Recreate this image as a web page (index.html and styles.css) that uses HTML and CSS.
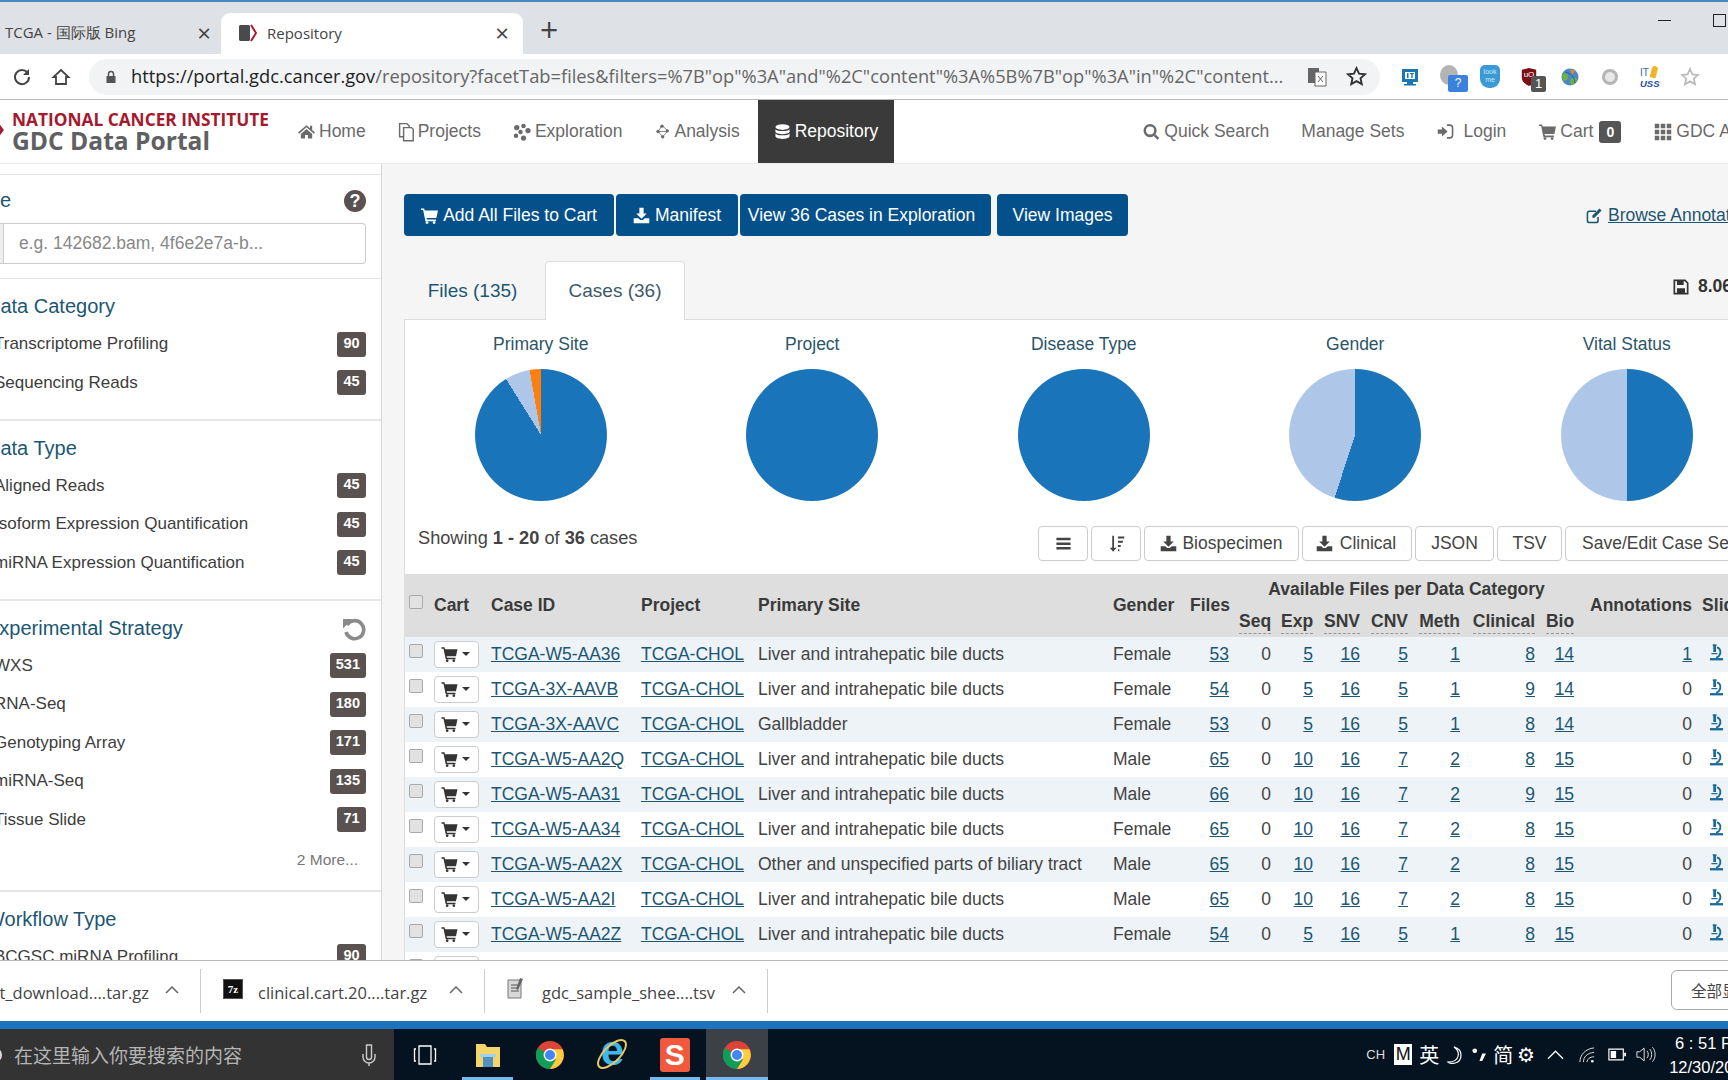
FILE: index.html
```html
<!DOCTYPE html>
<html lang="en">
<head>
<meta charset="utf-8">
<title>Repository</title>
<link rel="stylesheet" href="styles.css">
</head>
<body>
<svg class="defs" width="0" height="0" aria-hidden="true">
  <symbol id="i-cart" viewBox="0 0 24 24"><path d="M0 2h4.500l.8 3H24l-2.300 10.500H7.800l.5 2.200H21v2.300H6.300L3 4.300H0z"/><circle cx="8.500" cy="22" r="2"/><circle cx="18.500" cy="22" r="2"/></symbol>
  <symbol id="i-dl" viewBox="0 0 24 24"><path d="M9 1h6v8h4.500L12 16.500 4.500 9H9z"/><path d="M1 16h6.500l2.500 2.500h4l2.500-2.500H23v7H1z"/></symbol>
  <symbol id="i-home" viewBox="0 0 24 24"><path d="M12 3 0 13.500l1.500 1.700L12 6l10.500 9.200 1.500-1.700-4-3.500V4h-3v3.300z"/><path d="M4 15.500 12 8.500l8 7V22h-6v-5h-4v5H4z"/></symbol>
  <symbol id="i-copy" viewBox="0 0 20 24"><path fill="none" stroke="currentColor" stroke-width="1.800" d="M7 6.500V23h12V8.500L17 6.500zM7 18H2V1.500h9l3 3v2"/></symbol>
  <symbol id="i-dots" viewBox="0 0 24 24"><circle cx="5" cy="6" r="3.500"/><circle cx="14" cy="4" r="3"/><circle cx="20" cy="10" r="3.500"/><circle cx="10" cy="12" r="3"/><circle cx="4" cy="17" r="3"/><circle cx="14" cy="20" r="3.500"/></symbol>
  <symbol id="i-net" viewBox="0 0 24 24"><g fill="none" stroke="currentColor" stroke-width="1.200"><path d="M12 3 6 12l7 8M12 3l9 8-8 9M6 12h15"/></g><circle cx="12" cy="4" r="2.500"/><circle cx="6" cy="12" r="2.500"/><circle cx="20" cy="11" r="2.500"/><circle cx="13" cy="20" r="2.500"/></symbol>
  <symbol id="i-db" viewBox="0 0 24 24"><ellipse cx="12" cy="5" rx="10" ry="4"/><path d="M2 8c2 3.500 18 3.500 20 0v4c-2 4-18 4-20 0zM2 14c2 3.500 18 3.500 20 0v4c-1 5-19 5-20 0z"/></symbol>
  <symbol id="i-search" viewBox="0 0 24 24"><circle cx="10" cy="10" r="7.500" fill="none" stroke="currentColor" stroke-width="3.600"/><path d="M15 17.500l2.500-2.500L23 20.500 20.500 23z"/></symbol>
  <symbol id="i-login" viewBox="0 0 24 24"><path d="M1 9h6V5l8 7-8 7v-4H1z"/><path fill="none" stroke="currentColor" stroke-width="2.200" d="M14 3h4c3 0 4 2 4 4v10c0 2-1 4-4 4h-4"/></symbol>
  <symbol id="i-grid" viewBox="0 0 24 24"><path d="M1 1h6v6H1zM9 1h6v6H9zM17 1h6v6h-6zM1 9h6v6H1zM9 9h6v6H9zM17 9h6v6h-6zM1 17h6v6H1zM9 17h6v6H9zM17 17h6v6h-6z"/></symbol>
  <symbol id="i-bars" viewBox="0 0 24 24"><path d="M2 4h20v3.500H2zM2 10.500h20V14H2zM2 17h20v3.500H2z"/></symbol>
  <symbol id="i-sort" viewBox="0 0 24 24"><path d="M6 1h2.500v17H12l-4.700 5.500L2.500 18H6zM14 2h9v3h-9zM14 8h7v3h-7zM14 14h4v3h-4zM14 20h2v3h-2z"/></symbol>
  <symbol id="i-scope" viewBox="0 0 14 18"><path d="M3 0h4v2H6.500v6.500H3.500V2H3zM1.500 9.500h6.500v1.500H1.500z"/><path fill="none" stroke="currentColor" stroke-width="2" d="M7.500 3.500c4 1 5 6 2 9.500-1 1-2 1.500-3 1.500"/><path d="M0 15h14v2.500H0z"/></symbol>
  <symbol id="i-edit" viewBox="0 0 24 24"><path fill="none" stroke="currentColor" stroke-width="2.200" d="M17 14v5c0 2-1 3-3 3H5c-2 0-3-1-3-3V9c0-2 1-3 3-3h9"/><path d="M9 12 19 2l3 3-10 10H9z"/></symbol>
  <symbol id="i-save" viewBox="0 0 24 24"><path fill="none" stroke="currentColor" stroke-width="2.500" d="M2 2h16l4 4v16H2z"/><path d="M6 2h10v7H6zM6 14h12v8H6z"/></symbol>
  <symbol id="i-chrome" viewBox="0 0 24 24"><circle cx="12" cy="12" r="12" fill="#db4437"/><path d="M12 12 1.600 6A12 12 0 0 0 12 24l5-8z" fill="#0f9d58"/><path d="M12 7h10.700A12 12 0 0 1 12 24l5-8z" fill="#ffcd40"/><circle cx="12" cy="12" r="5.500" fill="#fff"/><circle cx="12" cy="12" r="4.300" fill="#4285f4"/></symbol>
  <symbol id="i-chev" viewBox="0 0 14 8"><path fill="none" stroke="#666" stroke-width="1.500" d="M1 7l6-6 6 6"/></symbol>
</svg>

<div class="tabstrip">
  <div class="tab tab-idle"><span class="tab-title">TCGA - 国际版 Bing</span><span class="tab-x">×</span></div>
  <div class="tab tab-active">
    <svg class="favicon" viewBox="0 0 20 20"><path fill="#4a4a4a" d="M3 2h9l1 1v14l-1 1H3l-1-1V3z"/><path fill="none" stroke="#a6192e" stroke-width="2" d="M14 2l5 8-5 8"/></svg>
    <span class="tab-title">Repository</span><span class="tab-x">×</span>
  </div>
  <span class="tab-plus">+</span>
  <div class="winctl"><span class="win-min"></span><span class="win-max"></span></div>
</div>

<div class="toolbar">
  <svg class="tb-reload" viewBox="0 0 20 20"><path fill="none" stroke="#444" stroke-width="2" d="M16 6.500A7 7 0 1 0 17 10"/><path fill="#444" d="M17 2v6h-6z"/></svg>
  <svg class="tb-home" viewBox="0 0 20 20"><path fill="none" stroke="#444" stroke-width="1.800" d="M10 3 2.500 10H5v7h10v-7h2.500z"/></svg>
  <div class="omnibox">
    <svg class="lock" viewBox="0 0 12 14"><path fill="none" stroke="#555" stroke-width="1.500" d="M3.500 6V4a2.500 2.500 0 0 1 5 0v2"/><path fill="#555" d="M1.500 6h9v7h-9z"/></svg>
    <span class="url"><b>https://portal.gdc.cancer.gov</b>/repository?facetTab=files&amp;filters=%7B"op"%3A"and"%2C"content"%3A%5B%7B"op"%3A"in"%2C"content...</span>
    <svg class="translate" viewBox="0 0 20 20"><path fill="#666" d="M1 1h11v15H1z"/><path fill="#fff" stroke="#666" d="M8 5h11v14H8z"/><path fill="none" stroke="#666" d="M11 9l5 6M16 9l-5 6"/></svg>
    <svg class="star" viewBox="0 0 20 20"><path fill="none" stroke="#333" stroke-width="1.800" d="M10 2l2.400 5.300 5.600.6-4.200 3.800 1.200 5.600-5-2.900-5 2.900 1.200-5.600L2 7.900l5.600-.6z"/></svg>
  </div>
  <div class="exts">
    <svg class="ext" viewBox="0 0 20 20"><path fill="#1a77b5" d="M2 2h16v13h-5v2h3v1.500H4V17h3v-2H2z"/><path fill="#fff" d="M5 5h10v7H5z"/><path fill="#1a77b5" d="M7 6h1.500v5H7zM10 6h4v1h-1.300v4h-1.400V7H10z"/></svg>
    <span class="ext ext-msg"><i class="msg-blob"></i><i class="msg-q">?</i></span>
    <span class="ext ext-look">look<br>me</span>
    <span class="ext ext-shield"><svg viewBox="0 0 20 20"><path fill="#7b1113" d="M2 2l8-2 8 2v9c0 4-4 7-8 9-4-2-8-5-8-9z"/></svg><i class="shield-u">uO</i><i class="shield-n">1</i></span>
    <svg class="ext" viewBox="0 0 20 20"><circle cx="10" cy="10" r="8.500" fill="#4a86c8"/><path fill="#6cb33f" d="M2 8c3-3 6-2 6 2s-4 4-5 4zM10 13c3-3 6-2 7-1s-3 6-6 6z"/><path fill="#e08a2e" d="M10 2l5 2-3 4z"/><path fill="none" stroke="#2b5f8f" d="M5 5c6 1 10 6 10 11"/></svg>
    <span class="ext ext-orb"></span>
    <span class="ext ext-uss"><i class="uss-it">IT</i><i class="uss-b">USS</i><i class="uss-fl"></i></span>
    <svg class="ext" viewBox="0 0 20 20"><path fill="none" stroke="#bbb" stroke-width="1.800" d="M10 2l2.400 5.300 5.600.6-4.200 3.800 1.200 5.600-5-2.900-5 2.900 1.200-5.600L2 7.900l5.600-.6z"/></svg>
  </div>
</div>

<div class="page">
  <header class="nav">
    <div class="logo">
      <svg class="logo-mark" viewBox="0 0 6 20"><path fill="none" stroke="#a6192e" stroke-width="3" d="M-4 2l6 8-6 8"/></svg>
      <div class="logo-nci">NATIONAL CANCER INSTITUTE</div>
      <div class="logo-gdc">GDC Data Portal</div>
    </div>
    <a class="nav-item"><svg class="ni ni-16"><use href="#i-home"/></svg>Home</a>
    <a class="nav-item"><svg class="ni ni-copy"><use href="#i-copy"/></svg>Projects</a>
    <a class="nav-item"><svg class="ni ni-18"><use href="#i-dots"/></svg>Exploration</a>
    <a class="nav-item"><svg class="ni ni-net"><use href="#i-net"/></svg>Analysis</a>
    <a class="nav-item nav-active"><svg class="ni ni-17"><use href="#i-db"/></svg>Repository</a>
    <a class="nav-item nav-search"><svg class="ni ni-17"><use href="#i-search"/></svg>Quick Search</a>
    <a class="nav-item">Manage Sets</a>
    <a class="nav-item nav-login"><svg class="ni ni-16"><use href="#i-login"/></svg>Login</a>
    <a class="nav-item nav-cart"><svg class="ni ni-16"><use href="#i-cart"/></svg>Cart<span class="cart-badge">0</span></a>
    <a class="nav-item nav-apps"><svg class="ni ni-18"><use href="#i-grid"/></svg>GDC Apps</a>
  </header>

  <div class="body">
    <aside class="side">
      <section class="facet facet-first">
        <div class="facet-head"><h3 class="facet-title title-file">File</h3><span class="help">?</span></div>
        <div class="input"><span class="input-addon"></span><span class="placeholder">e.g. 142682.bam, 4f6e2e7a-b...</span></div>
      </section>
      <section class="facet">
        <div class="facet-head"><h3 class="facet-title">Data Category</h3></div>
        <div class="row"><span class="lab">Transcriptome Profiling</span><span class="badge">90</span></div>
        <div class="row"><span class="lab">Sequencing Reads</span><span class="badge">45</span></div>
      </section>
      <section class="facet">
        <div class="facet-head"><h3 class="facet-title">Data Type</h3></div>
        <div class="row"><span class="lab">Aligned Reads</span><span class="badge">45</span></div>
        <div class="row"><span class="lab">Isoform Expression Quantification</span><span class="badge">45</span></div>
        <div class="row"><span class="lab">miRNA Expression Quantification</span><span class="badge">45</span></div>
      </section>
      <section class="facet">
        <div class="facet-head"><h3 class="facet-title">Experimental Strategy</h3>
          <svg class="undo" viewBox="0 0 24 24"><path fill="none" stroke="#8a8a8a" stroke-width="3.600" d="M5 8a9 9 0 1 1-1 7"/><path fill="#8a8a8a" d="M1 2h9.500L1 11.500z"/></svg>
        </div>
        <div class="row"><span class="lab">WXS</span><span class="badge">531</span></div>
        <div class="row"><span class="lab">RNA-Seq</span><span class="badge">180</span></div>
        <div class="row"><span class="lab">Genotyping Array</span><span class="badge">171</span></div>
        <div class="row"><span class="lab">miRNA-Seq</span><span class="badge">135</span></div>
        <div class="row"><span class="lab">Tissue Slide</span><span class="badge">71</span></div>
        <div class="more">2 More...</div>
      </section>
      <section class="facet">
        <div class="facet-head"><h3 class="facet-title">Workflow Type</h3></div>
        <div class="row"><span class="lab">BCGSC miRNA Profiling</span><span class="badge">90</span></div>
      </section>
    </aside>

    <main class="main">
      <div class="actions">
        <a class="btn btn-cart"><svg class="bi"><use href="#i-cart"/></svg>Add All Files to Cart</a>
        <a class="btn btn-man"><svg class="bi"><use href="#i-dl"/></svg>Manifest</a>
        <a class="btn btn-view">View 36 Cases in Exploration</a>
        <a class="btn btn-img">View Images</a>
        <a class="annot"><svg class="bi"><use href="#i-edit"/></svg>Browse Annotations</a>
      </div>
      <div class="tabs">
        <span class="ptab">Files (135)</span>
        <span class="ptab ptab-on">Cases (36)</span>
        <span class="size"><svg class="si"><use href="#i-save"/></svg><b>8.06 TB</b></span>
      </div>
      <div class="panel">
        <div class="charts">
          <div class="chart"><div class="chart-t">Primary Site</div><div class="pie pie-site"></div></div>
          <div class="chart"><div class="chart-t">Project</div><div class="pie pie-full"></div></div>
          <div class="chart"><div class="chart-t">Disease Type</div><div class="pie pie-full"></div></div>
          <div class="chart"><div class="chart-t">Gender</div><div class="pie pie-gender"></div></div>
          <div class="chart"><div class="chart-t">Vital Status</div><div class="pie pie-vital"></div></div>
        </div>
        <div class="tools">
          <div class="showing">Showing <b>1 - 20</b> of <b>36</b> cases</div>
          <div class="tool-btns">
            <a class="tbtn t-bars"><svg class="ti"><use href="#i-bars"/></svg></a>
            <a class="tbtn t-sort"><svg class="ti"><use href="#i-sort"/></svg></a>
            <a class="tbtn t-bio"><svg class="ti"><use href="#i-dl"/></svg>Biospecimen</a>
            <a class="tbtn t-cli"><svg class="ti"><use href="#i-dl"/></svg>Clinical</a>
            <a class="tbtn t-json">JSON</a>
            <a class="tbtn t-tsv">TSV</a>
            <a class="tbtn t-set">Save/Edit Case Set</a>
          </div>
        </div>
        <table class="cases">
          <colgroup>
            <col class="c-chk"><col class="c-cart"><col class="c-id"><col class="c-proj"><col class="c-site"><col class="c-gen"><col class="c-files"><col class="c-seq"><col class="c-exp"><col class="c-snv"><col class="c-cnv"><col class="c-meth"><col class="c-clin"><col class="c-bio"><col class="c-ann"><col class="c-sl">
          </colgroup>
          <thead>
            <tr class="h1">
              <th rowspan="2"><i class="cb cb-head"></i></th>
              <th rowspan="2">Cart</th><th rowspan="2">Case ID</th><th rowspan="2">Project</th><th rowspan="2">Primary Site</th><th rowspan="2">Gender</th>
              <th rowspan="2" class="r">Files</th>
              <th colspan="7" class="ctr">Available Files per Data Category</th>
              <th rowspan="2" class="r">Annotations</th><th rowspan="2">Slides</th>
            </tr>
            <tr class="h2">
              <th class="r"><u>Seq</u></th><th class="r"><u>Exp</u></th><th class="r"><u>SNV</u></th><th class="r"><u>CNV</u></th><th class="r"><u>Meth</u></th><th class="r"><u>Clinical</u></th><th class="r"><u>Bio</u></th>
            </tr>
          </thead>
          <tbody>
            <tr><td><i class="cb"></i></td><td><span class="cbtn"><svg class="cc"><use href="#i-cart"/></svg><i class="car"></i></span></td><td><a>TCGA-W5-AA36</a></td><td><a>TCGA-CHOL</a></td><td>Liver and intrahepatic bile ducts</td><td>Female</td><td class="r"><a>53</a></td><td class="r">0</td><td class="r"><a>5</a></td><td class="r"><a>16</a></td><td class="r"><a>5</a></td><td class="r"><a>1</a></td><td class="r"><a>8</a></td><td class="r"><a>14</a></td><td class="r"><a>1</a></td><td><svg class="sc"><use href="#i-scope"/></svg></td></tr>
            <tr><td><i class="cb"></i></td><td><span class="cbtn"><svg class="cc"><use href="#i-cart"/></svg><i class="car"></i></span></td><td><a>TCGA-3X-AAVB</a></td><td><a>TCGA-CHOL</a></td><td>Liver and intrahepatic bile ducts</td><td>Female</td><td class="r"><a>54</a></td><td class="r">0</td><td class="r"><a>5</a></td><td class="r"><a>16</a></td><td class="r"><a>5</a></td><td class="r"><a>1</a></td><td class="r"><a>9</a></td><td class="r"><a>14</a></td><td class="r">0</td><td><svg class="sc"><use href="#i-scope"/></svg></td></tr>
            <tr><td><i class="cb"></i></td><td><span class="cbtn"><svg class="cc"><use href="#i-cart"/></svg><i class="car"></i></span></td><td><a>TCGA-3X-AAVC</a></td><td><a>TCGA-CHOL</a></td><td>Gallbladder</td><td>Female</td><td class="r"><a>53</a></td><td class="r">0</td><td class="r"><a>5</a></td><td class="r"><a>16</a></td><td class="r"><a>5</a></td><td class="r"><a>1</a></td><td class="r"><a>8</a></td><td class="r"><a>14</a></td><td class="r">0</td><td><svg class="sc"><use href="#i-scope"/></svg></td></tr>
            <tr><td><i class="cb"></i></td><td><span class="cbtn"><svg class="cc"><use href="#i-cart"/></svg><i class="car"></i></span></td><td><a>TCGA-W5-AA2Q</a></td><td><a>TCGA-CHOL</a></td><td>Liver and intrahepatic bile ducts</td><td>Male</td><td class="r"><a>65</a></td><td class="r">0</td><td class="r"><a>10</a></td><td class="r"><a>16</a></td><td class="r"><a>7</a></td><td class="r"><a>2</a></td><td class="r"><a>8</a></td><td class="r"><a>15</a></td><td class="r">0</td><td><svg class="sc"><use href="#i-scope"/></svg></td></tr>
            <tr><td><i class="cb"></i></td><td><span class="cbtn"><svg class="cc"><use href="#i-cart"/></svg><i class="car"></i></span></td><td><a>TCGA-W5-AA31</a></td><td><a>TCGA-CHOL</a></td><td>Liver and intrahepatic bile ducts</td><td>Male</td><td class="r"><a>66</a></td><td class="r">0</td><td class="r"><a>10</a></td><td class="r"><a>16</a></td><td class="r"><a>7</a></td><td class="r"><a>2</a></td><td class="r"><a>9</a></td><td class="r"><a>15</a></td><td class="r">0</td><td><svg class="sc"><use href="#i-scope"/></svg></td></tr>
            <tr><td><i class="cb"></i></td><td><span class="cbtn"><svg class="cc"><use href="#i-cart"/></svg><i class="car"></i></span></td><td><a>TCGA-W5-AA34</a></td><td><a>TCGA-CHOL</a></td><td>Liver and intrahepatic bile ducts</td><td>Female</td><td class="r"><a>65</a></td><td class="r">0</td><td class="r"><a>10</a></td><td class="r"><a>16</a></td><td class="r"><a>7</a></td><td class="r"><a>2</a></td><td class="r"><a>8</a></td><td class="r"><a>15</a></td><td class="r">0</td><td><svg class="sc"><use href="#i-scope"/></svg></td></tr>
            <tr><td><i class="cb"></i></td><td><span class="cbtn"><svg class="cc"><use href="#i-cart"/></svg><i class="car"></i></span></td><td><a>TCGA-W5-AA2X</a></td><td><a>TCGA-CHOL</a></td><td>Other and unspecified parts of biliary tract</td><td>Male</td><td class="r"><a>65</a></td><td class="r">0</td><td class="r"><a>10</a></td><td class="r"><a>16</a></td><td class="r"><a>7</a></td><td class="r"><a>2</a></td><td class="r"><a>8</a></td><td class="r"><a>15</a></td><td class="r">0</td><td><svg class="sc"><use href="#i-scope"/></svg></td></tr>
            <tr><td><i class="cb"></i></td><td><span class="cbtn"><svg class="cc"><use href="#i-cart"/></svg><i class="car"></i></span></td><td><a>TCGA-W5-AA2I</a></td><td><a>TCGA-CHOL</a></td><td>Liver and intrahepatic bile ducts</td><td>Male</td><td class="r"><a>65</a></td><td class="r">0</td><td class="r"><a>10</a></td><td class="r"><a>16</a></td><td class="r"><a>7</a></td><td class="r"><a>2</a></td><td class="r"><a>8</a></td><td class="r"><a>15</a></td><td class="r">0</td><td><svg class="sc"><use href="#i-scope"/></svg></td></tr>
            <tr><td><i class="cb"></i></td><td><span class="cbtn"><svg class="cc"><use href="#i-cart"/></svg><i class="car"></i></span></td><td><a>TCGA-W5-AA2Z</a></td><td><a>TCGA-CHOL</a></td><td>Liver and intrahepatic bile ducts</td><td>Female</td><td class="r"><a>54</a></td><td class="r">0</td><td class="r"><a>5</a></td><td class="r"><a>16</a></td><td class="r"><a>5</a></td><td class="r"><a>1</a></td><td class="r"><a>8</a></td><td class="r"><a>15</a></td><td class="r">0</td><td><svg class="sc"><use href="#i-scope"/></svg></td></tr>
            <tr><td><i class="cb"></i></td><td><span class="cbtn"></span></td><td></td><td></td><td></td><td></td><td></td><td></td><td></td><td></td><td></td><td></td><td></td><td></td><td></td><td></td></tr>
          </tbody>
        </table>
      </div>
    </main>
  </div>
</div>

<div class="shelf">
  <div class="dl dl-1"><span class="dl-name">t_download....tar.gz</span><svg class="dl-car"><use href="#i-chev"/></svg></div>
  <div class="dl dl-2"><span class="ico-7z">7z</span><span class="dl-name">clinical.cart.20....tar.gz</span><svg class="dl-car"><use href="#i-chev"/></svg></div>
  <div class="dl dl-3"><svg class="ico-doc" viewBox="0 0 18 22"><path fill="#d8d8d8" stroke="#777" d="M1 3h13v18H1z"/><path stroke="#555" d="M4 8h8M4 11h8M4 14h8"/><path fill="#666" d="M13 1l3 1-5 11-2-1z"/></svg><span class="dl-name">gdc_sample_shee....tsv</span><svg class="dl-car"><use href="#i-chev"/></svg></div>
  <div class="showall">全部显示</div>
</div>
<div class="accent"></div>
<div class="taskbar">
  <div class="search"><i class="search-ring"></i><span class="search-t">在这里输入你要搜索的内容</span>
    <svg class="mic" viewBox="0 0 14 24"><path fill="none" stroke="#ccc" stroke-width="1.400" d="M4.500 2h5v12a2.500 2.500 0 0 1-5 0zM1 11v3a6 6 0 0 0 12 0v-3M7 20v3"/></svg>
  </div>
  <div class="apps">
    <span class="app"><svg class="taskview" viewBox="0 0 24 24"><path fill="none" stroke="#fff" stroke-width="1.300" d="M6 3h12v18H6zM3 6H1.500v12H3M21 6h1.500v12H21"/></svg></span>
    <span class="app app-on"><svg class="ai" viewBox="0 0 28 28"><path fill="#f5d46a" d="M2 3h9l2 3h13v20H2z"/><path fill="#4f93c4" d="M9 15h10v11H9z"/><path fill="#9fd2ef" d="M6 13h16v3H6z"/></svg></span>
    <span class="app"><svg class="ai"><use href="#i-chrome"/></svg></span>
    <span class="app"><span class="ie">e</span><svg class="ie-ring" viewBox="0 0 34 34"><ellipse cx="17" cy="17" rx="18" ry="8" fill="none" stroke="#e8c860" stroke-width="2" transform="rotate(-45 17 17)"/></svg></span>
    <span class="app app-on"><span class="sbox">S</span></span>
    <span class="app app-cur"><svg class="ai"><use href="#i-chrome"/></svg></span>
  </div>
  <div class="tray">
    <span class="t-ch">CH</span><span class="t-m">M</span><span class="t-cn">英</span>
    <svg class="t-moon" viewBox="0 0 16 18"><path fill="none" stroke="#fff" stroke-width="1.200" d="M8 1c6 4 7 15-6 15 2 2 13 3 13-7 0-4-3-7-7-8z"/></svg>
    <svg class="t-dot" viewBox="0 0 16 16"><circle cx="4" cy="4" r="2.500" fill="#fff"/><path fill="#fff" d="M12 7h4l-4 8H9z"/></svg><span class="t-cn">简</span><span class="t-gear">⚙</span>
    <svg class="t-up" viewBox="0 0 18 10"><path fill="none" stroke="#fff" stroke-width="1.300" d="M1 9l8-8 8 8"/></svg>
    <svg class="t-wifi" viewBox="0 0 18 18"><path fill="none" stroke="#ddd" stroke-width="1.100" d="M1 17C1 9 7 2 17 1M5 17c0-6 4-10 12-11M9 17c0-3 3-6 8-6"/><circle cx="15" cy="16" r="1.500" fill="#fff"/></svg>
    <svg class="t-bat" viewBox="0 0 20 14"><path fill="none" stroke="#fff" stroke-width="1.300" d="M1 1h16v12H1z"/><path fill="#fff" d="M3 3h6v8H3zM18 5h2v4h-2z"/></svg>
    <svg class="t-vol" viewBox="0 0 22 18"><path fill="none" stroke="#ddd" stroke-width="1.100" d="M1 6h3l5-4v14l-5-4H1zM12 5c2 2 2 6 0 8M15 3c3 3 3 9 0 12M18 1c4 4 4 12 0 16"/></svg>
    <div class="clock"><span>6 : 51 PM</span><span>12/30/2020</span></div>
  </div>
</div>
</body>
</html>
```
FILE: styles.css
```css
* { box-sizing: border-box; }
html, body { margin: 0; height: 1080px; overflow: hidden; }
body { width: 1728px; display: flex; flex-direction: column; font-family: "Liberation Sans", Arial, sans-serif; font-size: 17.5px; color: #444; background: #fff; }
i, u { font-style: normal; }
a { color: inherit; }
.defs { position: absolute; }

/* browser chrome */
.tabstrip { height: 54px; flex: none; background: #dee1e6; border-top: 2px solid #4a86c0; display: flex; align-items: flex-end; font-family: "Open Sans", sans-serif; font-size: 15px; position: relative; }
.tab { height: 41px; display: flex; align-items: center; padding-bottom: 2px; }
.tab-idle { width: 221px; padding: 0 10px 2px 5px; }
.tab-active { width: 302px; background: #fff; border-radius: 9px 9px 0 0; padding: 0 14px 2px 16px; }
.tab-title { color: #444; flex: 1; }
.tab-x { color: #444; font-size: 24px; line-height: 1; }
.favicon { width: 20px; height: 20px; margin-right: 10px; }
.tab-plus { font-size: 32px; color: #444; margin: 0 0 6px 17px; line-height: 36px; }
.winctl { position: absolute; right: 0; top: 12px; width: 70px; display: flex; gap: 42px; align-items: center; }
.win-min { width: 13px; height: 1px; background: #222; }
.win-max { width: 13px; height: 13px; border: 1px solid #222; }

.toolbar { height: 46px; flex: none; background: #fff; border-bottom: 1px solid #b9b9b9; display: flex; align-items: center; padding-left: 12px; }
.tb-reload { width: 20px; height: 20px; }
.tb-home { width: 20px; height: 20px; margin-left: 19px; }
.omnibox { width: 1291px; height: 36px; margin-left: 18px; background: #f1f3f4; border-radius: 18px; display: flex; align-items: center; padding-left: 16px; position: relative; }
.lock { width: 12px; height: 14px; margin-right: 14px; flex: none; }
.url { font-family: "Open Sans", sans-serif; font-size: 18.300px; color: #666; white-space: nowrap; flex: none; width: 1157px; overflow: hidden; margin-top: -2px; }
.url b { font-weight: 400; color: #222; }
.translate { width: 20px; height: 20px; margin-left: 19px; flex: none; }
.star { width: 21px; height: 21px; margin-left: 19px; flex: none; }
.exts { display: flex; align-items: center; margin-left: 20px; gap: 20px; }
.ext { width: 20px; height: 20px; display: block; position: relative; flex: none; }
.msg-blob { position: absolute; left: 0; top: -2px; width: 18px; height: 20px; border-radius: 50%; background: #b4b4b4; }
.msg-q { position: absolute; left: 8px; top: 8px; width: 20px; height: 17px; background: #3b82e0; color: #fff; font-size: 12px; text-align: center; border-radius: 2px; line-height: 17px; }
.ext-look { background: #3b9ad6; color: #cde8f8; font-size: 7px; line-height: 8px; text-align: center; border-radius: 5px 5px 9px 9px; height: 23px; padding-top: 3px; }
.ext-shield svg { width: 18px; height: 20px; display: block; }
.shield-u { position: absolute; left: 2px; top: 3px; width: 14px; color: #fff; font-size: 8px; line-height: 10px; text-align: center; }
.shield-n { position: absolute; left: 11px; top: 9px; width: 15px; height: 16px; background: #555; color: #fff; font-size: 13px; line-height: 16px; text-align: center; border-radius: 2px; }
.ext-orb { border-radius: 50%; border: 3px solid #b5b5b5; background: #e8e8e8; width: 16px; height: 16px; margin: 2px; }
.uss-it { position: absolute; left: 0; top: 0; font-size: 10px; color: #2a6db5; }
.uss-b { position: absolute; left: 0; top: 11px; font-size: 9.500px; font-weight: 700; font-style: italic; color: #1a4fa0; }
.uss-fl { position: absolute; left: 11px; top: -1px; width: 6px; height: 12px; background: #f0b429; border-radius: 3px 3px 1px 1px; transform: rotate(15deg); }

.page { height: 860px; flex: none; display: flex; flex-direction: column; overflow: hidden; }
.nav { height: 63px; flex: none; display: flex; align-items: center; background: #fff; gap: 32px; white-space: nowrap; color: #6a6a6a; }
.logo { width: 266px; flex: none; padding: 0 0 1px 12px; position: relative; }
.logo-mark { position: absolute; left: 0; top: 10px; width: 6px; height: 20px; }
.logo-nci { font-family: "Open Sans", sans-serif; font-weight: 700; font-size: 17.300px; line-height: 20px; color: #a6192e; }
.logo-gdc { font-family: "Open Sans", sans-serif; font-weight: 700; font-size: 24.600px; line-height: 22px; color: #5f6062; }
.nav-item { display: flex; align-items: center; height: 63px; flex: none; }
.ni { fill: currentColor; margin-right: 4px; flex: none; }
.ni-copy { width: 16px; height: 20px; }
.ni-net { width: 16px; height: 17px; }
.ni-16 { width: 17px; height: 17px; }
.ni-17 { width: 17px; height: 18px; }
.ni-18 { width: 18px; height: 18px; }
.nav-active { background: #3a3a3a; color: #fff; padding: 0 16px; margin-left: -14px; }
.nav-search { margin-left: 217px; }
.nav-login .ni { margin-right: 9px; }
.nav-login { margin-left: 1px; }
.nav-cart { margin-left: 1px; }
.nav-apps { margin-left: 1px; }
.cart-badge { background: #555; color: #fff; font-size: 14px; font-weight: 700; width: 22px; height: 22px; border-radius: 3px; margin-left: 6px; display: flex; align-items: center; justify-content: center; }

.body { flex: 1; display: flex; min-height: 0; border-top: 1px solid #ececec; }
.side { width: 382px; flex: none; background: #fff; border-right: 1px solid #d8d8d8; padding-top: 10px; overflow: hidden; }
.facet { padding: 16px 15px 16.500px 0; border-bottom: 2px solid #e6e6e6; }
.facet-first { border-top: 1px solid #e6e6e6; padding: 14px 15px 14px 0; border-bottom: 1px solid #e6e6e6; }
.facet-head { display: flex; justify-content: space-between; align-items: center; height: 24px; margin-bottom: 6px; }
.facet-first .facet-head { margin-bottom: 10px; }
.facet-title { margin: 0 0 1px -14px; font-weight: 400; font-size: 20px; color: #1c5673; }
.title-file { margin-left: -21px; }
.help { width: 22px; height: 22px; border-radius: 50%; background: #5a5250; color: #fff; font-weight: 700; font-size: 18px; line-height: 22px; text-align: center; }
.undo { width: 24px; height: 24px; }
.input { height: 41px; border: 1px solid #ccc; border-left: 0; border-radius: 0 4px 4px 0; display: flex; align-items: center; }
.input-addon { width: 4px; height: 100%; background: #eee; border-right: 1px solid #ccc; flex: none; }
.placeholder { margin-left: 15px; color: #888; }
.row { height: 38.500px; display: flex; align-items: center; justify-content: space-between; color: #3d3d3d; }
.lab { margin-left: -6px; font-size: 17px; white-space: nowrap; }
.badge { min-width: 29px; height: 25px; background: #5a5250; color: #fff; border-radius: 3px; font-size: 14.500px; font-weight: 700; text-align: center; padding: 2px 6px 0; line-height: 18px; }
.more { height: 24px; margin-top: 9px; margin-right: 8px; margin-bottom: 1px; text-align: right; color: #777; font-size: 15.500px; line-height: 24px; }

.main { flex: 1; min-width: 0; background: #f5f5f5; padding: 30px 0 0 22px; overflow: hidden; }
.actions { display: flex; height: 42px; gap: 2px; white-space: nowrap; }
.btn { height: 42px; background: #03508a; color: #fff; border-radius: 4px; display: flex; align-items: center; justify-content: center; flex: none; }
.btn-cart { width: 210px; }
.btn-man { width: 122px; }
.btn-view { width: 251px; padding-right: 8px; }
.btn-img { width: 131px; margin-left: 4px; }
.bi { width: 17px; height: 17px; fill: currentColor; margin-right: 5px; flex: none; }
.annot { margin-left: 456px; display: flex; align-items: center; color: #1c5673; text-decoration: underline; }
.tabs { display: flex; height: 59px; margin-top: 25px; align-items: stretch; white-space: nowrap; position: relative; z-index: 1; }
.ptab { width: 137px; display: flex; align-items: center; justify-content: center; color: #1c5673; margin-right: 4px; flex: none; font-size: 19px; }
.ptab-on { width: 140px; margin-right: 0; background: #fff; border: 1px solid #ddd; border-bottom: 0; border-radius: 4px 4px 0 0; color: #3f5a68; }
.size { margin-left: 988px; display: flex; align-items: center; color: #333; padding-bottom: 8px; }
.si { width: 16px; height: 16px; fill: #333; margin-right: 9px; }
.panel { width: 1500px; background: #fff; border: 1px solid #ddd; border-right: 0; margin-top: -1px; padding-top: 12px; }
.charts { display: grid; grid-template-columns: repeat(5, 271.500px); }
.chart { display: flex; flex-direction: column; align-items: center; }
.chart-t { height: 24px; line-height: 24px; color: #2c5568; }
.pie { width: 132px; height: 132px; border-radius: 50%; margin-top: 13px; }
.pie-full { background: #1a74ba; }
.pie-site { background: conic-gradient(#1a74ba 0 328deg, #aec7e8 328deg 350deg, #ff7f0e 350deg 360deg); }
.pie-gender { background: conic-gradient(#1a74ba 0 198deg, #aec7e8 198deg 360deg); }
.pie-vital { background: conic-gradient(#1a74ba 0 180deg, #aec7e8 180deg 360deg); }
.tools { display: flex; align-items: center; height: 35px; margin-top: 25px; margin-bottom: 13px; white-space: nowrap; }
.showing { margin-left: 13px; width: 620px; flex: none; margin-top: -10px; font-size: 18.200px; }
.tool-btns { display: flex; gap: 3px; }
.tbtn { height: 35px; background: #fff; border: 1px solid #ccc; border-radius: 4px; display: flex; align-items: center; justify-content: center; color: #444; flex: none; }
.ti { width: 17px; height: 17px; fill: currentColor; margin-right: 5px; }
.t-bars, .t-sort { width: 50px; }
.t-bars .ti, .t-sort .ti { margin-right: 0; }
.t-bio { width: 155px; }
.t-cli { width: 110px; padding-right: 2px; }
.t-cli .ti { margin-right: 7px; }
.t-json { width: 79px; }
.t-tsv { width: 65px; }
.t-set { width: 170px; padding-left: 16px; justify-content: flex-start; }

.cases { border-collapse: collapse; table-layout: fixed; width: 1323px; }
.c-chk { width: 24px; } .c-cart { width: 57px; } .c-id { width: 150px; } .c-proj { width: 117px; } .c-site { width: 355px; } .c-gen { width: 77px; } .c-files { width: 49px; } .c-seq { width: 42px; } .c-exp { width: 42px; } .c-snv { width: 47px; } .c-cnv { width: 48px; } .c-meth { width: 52px; } .c-clin { width: 75px; } .c-bio { width: 39px; } .c-ann { width: 118px; } .c-sl { width: 60px; }
.cases th, .cases td { padding: 0 5px; white-space: nowrap; text-align: left; overflow: hidden; }
.cases thead { background: #dedede; color: #3a3a3a; }
.cases th { font-weight: 700; font-size: 17.500px; }
.cases .h1 { height: 31px; }
.cases .h2 { height: 32px; }
.cases .ctr { text-align: center; }
.cases .r { text-align: right; }
.h2 u { text-decoration: none; border-bottom: 1px dashed #999; display: inline-block; line-height: 24px; }
.cases tbody tr { height: 35px; }
.cases tbody tr:nth-child(odd) { background: #edf3f7; }
.cases td a { color: #1c5673; text-decoration: underline; }
.cb { display: block; width: 14px; height: 14px; border: 1px solid #aaa; border-radius: 2px; background: #e2e2e2; margin: -7px 0 0 -1px; }
.cbtn { display: flex; align-items: center; gap: 4px; width: 45px; height: 27px; background: #fff; border: 1px solid #ccc; border-radius: 4px; padding-left: 6px; margin-top: -1px; }
.cc { width: 17px; height: 16px; fill: #333; }
.car { width: 0; height: 0; border: 4px solid transparent; border-top-color: #333; border-bottom: 0; }
.sc { width: 13px; height: 17px; fill: #1c6a9a; color: #1c6a9a; display: block; margin: -4px 0 0 8px; }

/* downloads shelf and taskbar */
.shelf { height: 61px; flex: none; background: #fff; border-top: 1px solid #b9b9b9; display: flex; align-items: stretch; position: relative; font-family: "Open Sans", sans-serif; font-size: 16.500px; color: #444; white-space: nowrap; }
.dl { display: flex; align-items: center; border-right: 1px solid #ccc; margin: 8px 0; padding-right: 20px; flex: none; padding-top: 3px; }
.dl-1 { width: 201px; justify-content: flex-end; padding-right: 21px; }
.dl-2 { width: 284px; padding-left: 22px; padding-right: 21px; }
.dl-3 { width: 283px; padding-left: 22px; padding-right: 21px; }
.dl-name { flex: 1; text-align: left; }
.dl-1 .dl-name { flex: none; margin-right: 16px; }
.dl-car { width: 14px; height: 8px; flex: none; margin-top: -6px; }
.ico-7z { width: 20px; height: 20px; background: #111; border: 1px solid #555; color: #fff; font: 700 11px/18px "Liberation Serif", serif; text-align: center; margin-right: 15px; margin-top: -8px; }
.ico-doc { width: 18px; height: 22px; margin-right: 17px; margin-top: -10px; }
.showall { position: absolute; left: 1671px; top: 9px; width: 110px; height: 40px; border: 1px solid #aaa; border-radius: 6px; padding-left: 19px; line-height: 38px; font-family: "Noto Sans CJK SC", sans-serif; font-size: 15.500px; }
.accent { height: 8px; flex: none; background: #1c74bf; }
.taskbar { height: 51px; flex: none; background: #05121f; display: flex; align-items: stretch; color: #fff; white-space: nowrap; }
.search { width: 394px; flex: none; background: #333; display: flex; align-items: center; position: relative; padding-left: 14px; }
.search-ring { position: absolute; left: -14px; top: 18px; width: 16px; height: 16px; border: 2px solid #ddd; border-radius: 50%; }
.search-t { font-family: "Noto Sans CJK SC", sans-serif; font-size: 19px; color: #b5b5b5; }
.mic { width: 14px; height: 24px; margin-left: 120px; }
.apps { display: flex; }
.app { width: 62.400px; display: flex; align-items: center; justify-content: center; position: relative; }
.app-on::after, .app-cur::after { content: ""; position: absolute; left: 6px; right: 6px; bottom: 0; height: 3px; background: #76b9ed; }
.app-cur { background: #3b4147; }
.app-cur::after { left: 0; right: 0; }
.taskview { width: 24px; height: 24px; }
.ai { width: 28px; height: 28px; }
.ie { font: 700 42px/42px "Liberation Sans", sans-serif; color: #3fb6e8; margin-top: -8px; }
.ie-ring { position: absolute; left: 14px; top: 8px; width: 34px; height: 34px; overflow: visible; }
.sbox { width: 30px; height: 34px; background: #f0593d; border-radius: 3px; color: #fff; text-align: center; font-weight: 700; font-size: 30px; line-height: 34px; }
.tray { margin-left: 598px; display: flex; align-items: center; flex: none; position: relative; }
.t-ch { font-size: 13px; margin-right: 9px; color: #ddd; }
.t-m { width: 18px; height: 21px; background: #fff; color: #111; font-size: 18px; line-height: 21px; text-align: center; margin-right: 7px; }
.t-cn { font-family: "Noto Sans CJK SC", sans-serif; font-size: 20px; margin-right: 7px; }
.t-moon { width: 16px; height: 18px; margin-right: 9px; }
.t-dot { width: 15px; height: 15px; margin-right: 7px; }
.t-gear { font-size: 20px; margin-right: 12px; line-height: 20px; margin-left: -3px; }
.t-up { width: 17px; height: 10px; margin-right: 15px; }
.t-wifi { width: 16px; height: 16px; margin-right: 13px; }
.t-bat { width: 18px; height: 13px; margin-right: 10px; }
.t-vol { width: 20px; height: 17px; margin-right: 13px; }
.clock { display: flex; flex-direction: column; align-items: center; font-size: 16.500px; line-height: 24px; }
```
